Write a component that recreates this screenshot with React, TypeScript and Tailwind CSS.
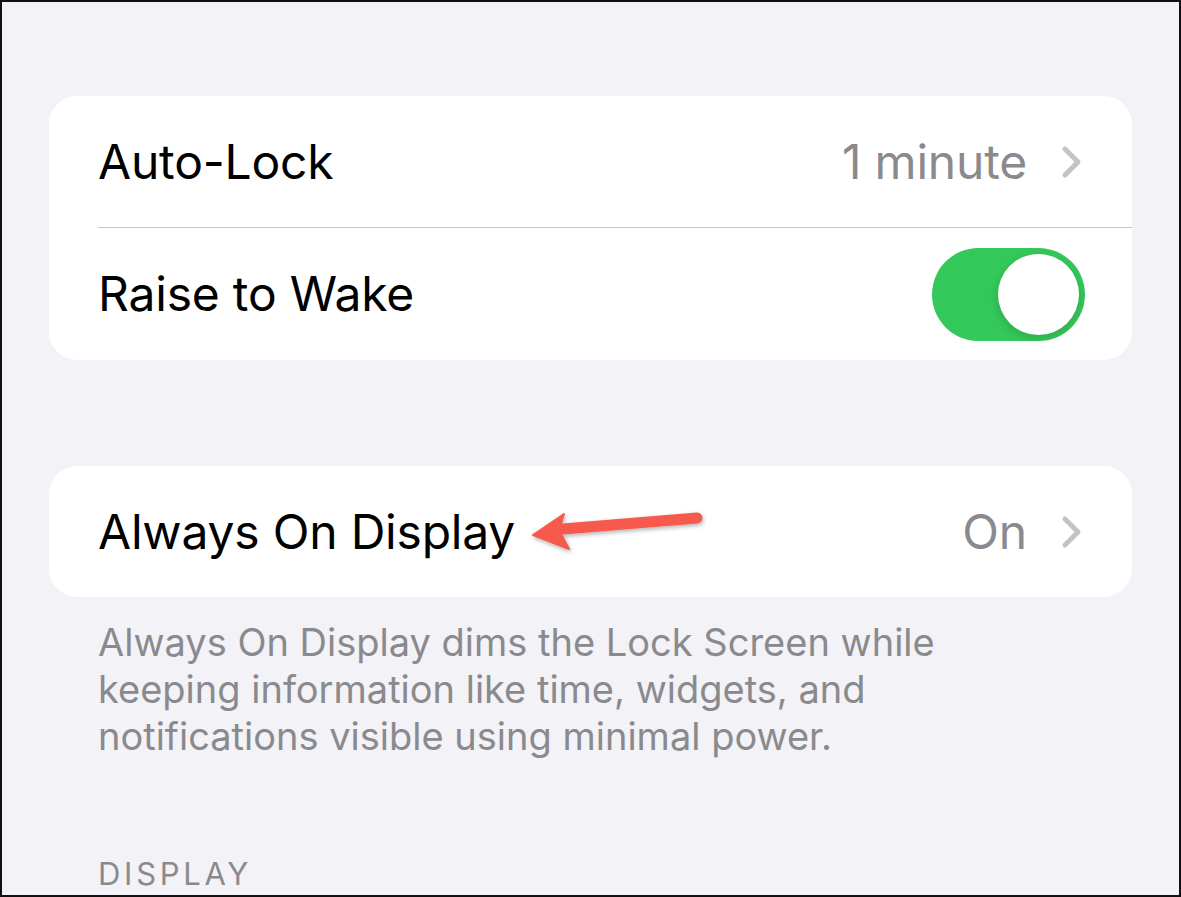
const font = { fontFamily: 'Inter, "Noto Sans", sans-serif' };

function Chevron() {
  return (
    <svg width="22" height="34" viewBox="0 0 22 34" className="ml-[34px]">
      <path d="M4 4 L17 17 L4 30" fill="none" stroke="#c4c4c7" strokeWidth="5" strokeLinecap="round" strokeLinejoin="round" />
    </svg>
  );
}

function Toggle() {
  return (
    <div className="w-[153px] h-[93px] rounded-full bg-[#34c759] flex items-center justify-end pr-[6px]">
      <div className="w-[81px] h-[81px] rounded-full bg-white shadow-[0_3px_8px_rgba(0,0,0,0.15)]" />
    </div>
  );
}

export default function App() {
  return (
    <div className="w-[1181px] h-[897px] bg-[#f2f2f7] border-2 border-[#111] overflow-hidden relative" style={font}>
      <div className="pl-[47px] pr-[47px] pt-[94px]">
        <div className="bg-white rounded-[28px]">
          <div className="h-[131px] flex items-center pl-[49px] pr-[49px]">
            <span className="text-[48px] text-black flex-1 tracking-[-0.2px]">Auto-Lock</span>
            <span className="text-[48px] text-[#8a8a8e] tracking-[-0.2px]">1 minute</span>
            <Chevron />
          </div>
          <div className="ml-[49px] h-px bg-[#c6c6c8]" />
          <div className="h-[132px] flex items-center pl-[49px] pr-[47px]">
            <span className="text-[48px] text-black flex-1 tracking-[-0.2px]">Raise to Wake</span>
            <Toggle />
          </div>
        </div>

        <div className="bg-white rounded-[28px] mt-[106px] relative">
          <div className="h-[131px] flex items-center pl-[49px] pr-[49px]">
            <span className="text-[48px] text-black flex-1 tracking-[-0.2px]">Always On Display</span>
            <span className="text-[48px] text-[#8a8a8e] tracking-[-0.2px]">On</span>
            <Chevron />
          </div>
          <svg className="absolute left-[430px] top-[40px]" width="240" height="50" viewBox="0 0 240 50">
            <defs>
              <filter id="sh" x="-10%" y="-50%" width="120%" height="200%">
                <feDropShadow dx="1" dy="2" stdDeviation="2" floodColor="#000" floodOpacity="0.3" />
              </filter>
            </defs>
            <g filter="url(#sh)">
              <path d="M218 12 L84 23" stroke="#f55a4e" strokeWidth="11" strokeLinecap="round" fill="none" />
              <path d="M54 29 L85 8 L80 24 L90 43 Z" fill="#f55a4e" strokeLinejoin="round" stroke="#f55a4e" strokeWidth="2" />
            </g>
          </svg>
        </div>

        <p className="mt-[22px] pl-[49px] pr-[100px] text-[38px] leading-[47px] text-[#8a8a8e]">
          Always On Display dims the Lock Screen while keeping information like time, widgets, and notifications visible using minimal power.
        </p>

        <p className="mt-[94px] pl-[49px] text-[31px] leading-[40px] tracking-[0.12em] text-[#8a8a8e]">DISPLAY</p>
      </div>
    </div>
  );
}
